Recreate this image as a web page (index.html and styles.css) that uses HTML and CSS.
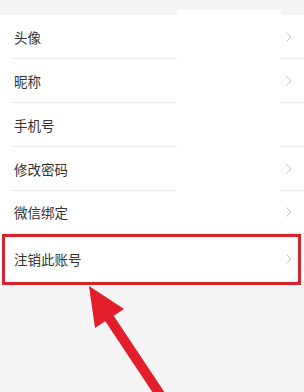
FILE: index.html
```html
<!DOCTYPE html>
<html lang="zh-CN">
<head>
  <meta charset="UTF-8">
  <meta name="viewport" content="width=device-width, initial-scale=1.0">
  <title>账号设置</title>
  <link rel="stylesheet" href="styles.css">
</head>
<body>
  <ul class="menu">
    <li class="menu-item"><span>头像</span><svg class="chevron" viewBox="0 0 6 10"><path d="M0.5 0.5 L5 5 L0.5 9.5"/></svg></li>
    <li class="menu-item"><span>昵称</span><svg class="chevron" viewBox="0 0 6 10"><path d="M0.5 0.5 L5 5 L0.5 9.5"/></svg></li>
    <li class="menu-item"><span>手机号</span></li>
    <li class="menu-item"><span>修改密码</span><svg class="chevron" viewBox="0 0 6 10"><path d="M0.5 0.5 L5 5 L0.5 9.5"/></svg></li>
    <li class="menu-item"><span>微信绑定</span><svg class="chevron" viewBox="0 0 6 10"><path d="M0.5 0.5 L5 5 L0.5 9.5"/></svg></li>
    <li class="menu-item marked"><span>注销此账号</span><svg class="chevron" viewBox="0 0 6 10"><path d="M0.5 0.5 L5 5 L0.5 9.5"/></svg></li>
  </ul>

  <!-- blanked-out area from the original capture -->
  <div class="blank"></div>

  <svg class="arrow" viewBox="0 0 304 392">
    <polygon points="89,286 124,309 113.7,315.8 169.2,399.3 160.8,404.7 105.3,321.2 95,328"/>
  </svg>
</body>
</html>
```

FILE: styles.css
```css
body {
  margin: 0;
  height: 392px;
  overflow: hidden;
  position: relative;
  background: #f5f5f6;
  font-family: "Noto Sans CJK SC", "Noto Sans", sans-serif;
}
.menu {
  list-style: none;
  margin: 15px 0 0;
  padding: 0;
  background: #fff;
}
.menu-item {
  height: 44px;
  margin-left: 12px;
  padding: 0 12px 0 2px;
  display: flex;
  align-items: center;
  justify-content: space-between;
  border-bottom: 1px solid #ececec;
  font-size: 13.5px;
  color: #333;
  box-sizing: border-box;
  position: relative;
}
.menu-item:nth-child(5) {
  height: 43px;
}
.menu-item.marked {
  height: 49px;
  border-bottom: none;
}
.menu-item.marked::after {
  content: "";
  position: absolute;
  top: 0;
  left: -10px;
  right: 3px;
  bottom: -2px;
  border: 3px solid #d8232c;
}
.chevron {
  width: 6px;
  height: 10px;
  fill: none;
  stroke: #c2c2c2;
  stroke-width: 1;
}
.blank {
  position: absolute;
  top: 10px;
  left: 177px;
  width: 104px;
  height: 185px;
  background: #fff;
}
.menu-item:nth-child(-n+2) .chevron,
.menu-item:nth-child(4) .chevron {
  position: relative;
  z-index: 1;
}
.menu-item:nth-child(1) .chevron {
  z-index: 1;
}
.arrow {
  position: absolute;
  top: 0;
  left: 0;
  width: 304px;
  height: 392px;
  fill: #e21e2a;
}
```
